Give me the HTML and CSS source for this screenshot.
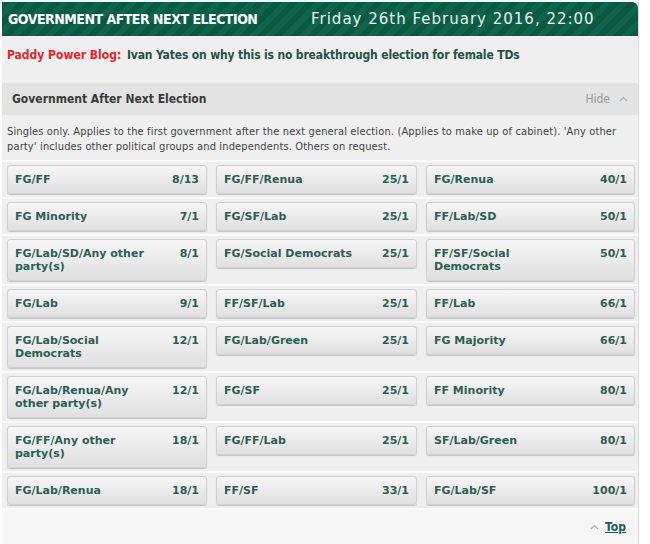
FILE: index.html
```html
<!DOCTYPE html>
<html>
<head>
<meta charset="utf-8">
<link rel="stylesheet" href="styles.css">
</head>
<body>
<div class="panel">
  <div class="header">
    <span class="title">GOVERNMENT AFTER NEXT ELECTION</span>
    <span class="date">Friday 26th February 2016, 22:00</span>
  </div>
  <div class="blog">
    <span class="blog-label">Paddy Power Blog:</span>
    <span class="blog-link">Ivan Yates on why this is no breakthrough election for female TDs</span>
  </div>
  <div class="market-head">
    <span class="market-title">Government After Next Election</span>
    <span class="hide">Hide <svg class="chev" width="9" height="6" viewBox="0 0 9 6"><path d="M1 5 L4.5 1.5 L8 5" fill="none" stroke="#b0b0b0" stroke-width="1.2"/></svg></span>
  </div>
  <div class="desc">Singles only. Applies to the first government after the next general election. (Applies to make up of cabinet). 'Any other party' includes other political groups and independents. Others on request.</div>
  <div class="rows">
    <div class="row">
      <div class="btn"><span class="name">FG/FF</span><span class="odds">8/13</span></div>
      <div class="btn"><span class="name">FG/FF/Renua</span><span class="odds">25/1</span></div>
      <div class="btn"><span class="name">FG/Renua</span><span class="odds">40/1</span></div>
    </div>
    <div class="row">
      <div class="btn"><span class="name">FG Minority</span><span class="odds">7/1</span></div>
      <div class="btn"><span class="name">FG/SF/Lab</span><span class="odds">25/1</span></div>
      <div class="btn"><span class="name">FF/Lab/SD</span><span class="odds">50/1</span></div>
    </div>
    <div class="row">
      <div class="btn"><span class="name">FG/Lab/SD/Any other party(s)</span><span class="odds">8/1</span></div>
      <div class="btn"><span class="name">FG/Social Democrats</span><span class="odds">25/1</span></div>
      <div class="btn"><span class="name">FF/SF/Social Democrats</span><span class="odds">50/1</span></div>
    </div>
    <div class="row">
      <div class="btn"><span class="name">FG/Lab</span><span class="odds">9/1</span></div>
      <div class="btn"><span class="name">FF/SF/Lab</span><span class="odds">25/1</span></div>
      <div class="btn"><span class="name">FF/Lab</span><span class="odds">66/1</span></div>
    </div>
    <div class="row">
      <div class="btn"><span class="name">FG/Lab/Social Democrats</span><span class="odds">12/1</span></div>
      <div class="btn"><span class="name">FG/Lab/Green</span><span class="odds">25/1</span></div>
      <div class="btn"><span class="name">FG Majority</span><span class="odds">66/1</span></div>
    </div>
    <div class="row">
      <div class="btn"><span class="name">FG/Lab/Renua/Any other party(s)</span><span class="odds">12/1</span></div>
      <div class="btn"><span class="name">FG/SF</span><span class="odds">25/1</span></div>
      <div class="btn"><span class="name">FF Minority</span><span class="odds">80/1</span></div>
    </div>
    <div class="row">
      <div class="btn"><span class="name">FG/FF/Any other party(s)</span><span class="odds">18/1</span></div>
      <div class="btn"><span class="name">FG/FF/Lab</span><span class="odds">25/1</span></div>
      <div class="btn"><span class="name">SF/Lab/Green</span><span class="odds">80/1</span></div>
    </div>
    <div class="row">
      <div class="btn"><span class="name">FG/Lab/Renua</span><span class="odds">18/1</span></div>
      <div class="btn"><span class="name">FF/SF</span><span class="odds">33/1</span></div>
      <div class="btn"><span class="name">FG/Lab/SF</span><span class="odds">100/1</span></div>
    </div>
  </div>
  <div class="footer">
    <svg class="chev" width="9" height="6" viewBox="0 0 9 6"><path d="M1 5 L4.5 1.5 L8 5" fill="none" stroke="#b0b0b0" stroke-width="1.2"/></svg>
    <a class="top" href="#">Top</a>
  </div>
</div>
</body>
</html>
```
FILE: styles.css
```css
html, body {
  margin: 0;
  padding: 0;
  background: #ffffff;
}
body {
  font-family: "DejaVu Sans", Verdana, sans-serif;
  font-stretch: condensed;
}
.panel {
  width: 636px;
  margin: 2px 0 0 2px;
  background: #efefef;
  border-right: 1px solid #dcdcdc;
  height: 542px;
  overflow: hidden;
}
.header {
  height: 34px;
  display: flex;
  align-items: center;
  border-radius: 0 6px 0 0;
  background-color: #0d5c45;
  background-image: repeating-linear-gradient(135deg, #0b5842 0px, #0b5842 6px, #11644c 6px, #11644c 12px);
  color: #fff;
}
.title {
  font-weight: bold;
  font-size: 14px;
  padding-left: 6px;
  width: 303px;
  letter-spacing: -0.5px;
}
.date {
  font-size: 15px;
  font-stretch: normal;
  color: #e8f0ec;
  letter-spacing: 1px;
}
.blog {
  height: 47px;
  padding: 12px 0 0 5px;
  box-sizing: border-box;
  font-size: 12px;
  font-weight: bold;
}
.blog-label {
  color: #e8262a;
  margin-right: 2px;
}
.blog-link {
  color: #245246;
  letter-spacing: -0.15px;
}
.market-head {
  height: 32px;
  background: #e3e3e3;
  display: flex;
  align-items: center;
  justify-content: space-between;
  padding: 0 10px 0 10px;
  box-sizing: border-box;
}
.market-title {
  font-size: 12px;
  font-weight: bold;
  color: #3a3a3a;
}
.hide {
  font-size: 12px;
  color: #9a9a9a;
  display: flex;
  align-items: center;
  gap: 9px;
}
.desc {
  padding: 9px 10px 0 5px;
  font-size: 11px;
  line-height: 15px;
  color: #444;
  letter-spacing: 0.14px;
  height: 45px;
  box-sizing: border-box;
}
.rows {
  border-top: 2px solid #fafafa;
}
.row {
  display: grid;
  grid-template-columns: 200px 201px 209px;
  column-gap: 9px;
  align-items: start;
  padding: 3px 0 3px 5px;
  border-bottom: 2px solid #fafafa;
}
.btn {
  display: flex;
  justify-content: space-between;
  align-items: flex-start;
  padding: 7px 7px 7px 7px;
  min-height: 28px;
  box-sizing: border-box;
  background: linear-gradient(#f6f6f6, #e0e0e0);
  border: 1px solid #d0d0d0;
  border-radius: 3px;
  box-shadow: 0 1px 1px rgba(0,0,0,0.18);
  font-size: 11px;
  font-stretch: normal;
  line-height: 13px;
  font-weight: bold;
  color: #2d5e54;
}
.name {
  max-width: 138px;
}
.odds {
  white-space: nowrap;
}
.footer {
  height: 34px;
  display: flex;
  align-items: center;
  justify-content: flex-end;
  gap: 6px;
  padding-right: 12px;
  background: #f6f6f6;
}
.top {
  font-size: 12px;
  font-weight: bold;
  color: #1f5c50;
  text-decoration: underline;
}
```
